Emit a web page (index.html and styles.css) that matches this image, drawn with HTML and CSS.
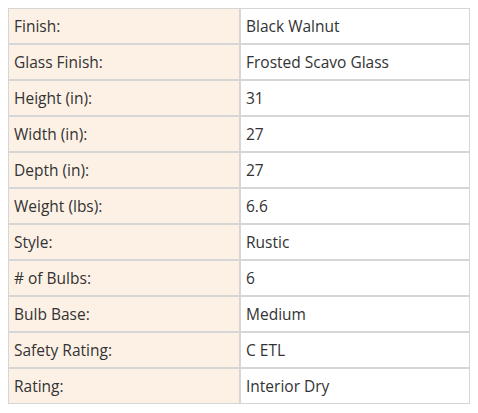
FILE: index.html
```html
<!DOCTYPE html>
<html>
<head>
<meta charset="utf-8">
<link rel="stylesheet" href="styles.css">
</head>
<body>
<table class="specs">
  <tbody>
    <tr><td class="label">Finish:</td><td class="value">Black Walnut</td></tr>
    <tr><td class="label">Glass Finish:</td><td class="value">Frosted Scavo Glass</td></tr>
    <tr><td class="label">Height (in):</td><td class="value">31</td></tr>
    <tr><td class="label">Width (in):</td><td class="value">27</td></tr>
    <tr><td class="label">Depth (in):</td><td class="value">27</td></tr>
    <tr><td class="label">Weight (lbs):</td><td class="value">6.6</td></tr>
    <tr><td class="label">Style:</td><td class="value">Rustic</td></tr>
    <tr><td class="label"># of Bulbs:</td><td class="value">6</td></tr>
    <tr><td class="label">Bulb Base:</td><td class="value">Medium</td></tr>
    <tr><td class="label">Safety Rating:</td><td class="value">C ETL</td></tr>
    <tr><td class="label">Rating:</td><td class="value">Interior Dry</td></tr>
  </tbody>
</table>
</body>
</html>
```
FILE: styles.css
```css
body {
  margin: 8px;
  background: #ffffff;
  font-family: "Open Sans", "Segoe UI", sans-serif;
  color: #333333;
}
.specs {
  width: 462px;
  border-collapse: separate;
  border-spacing: 0;
}
.specs td {
  border: 1px solid #d6d6d6;
  height: 36px;
  padding: 0 5px;
  box-sizing: border-box;
  font-size: 15.5px;
  vertical-align: middle;
}
.specs td.label {
  width: 232px;
  background: #fdf1e6;
}
.specs td.value {
  background: #ffffff;
}
```
